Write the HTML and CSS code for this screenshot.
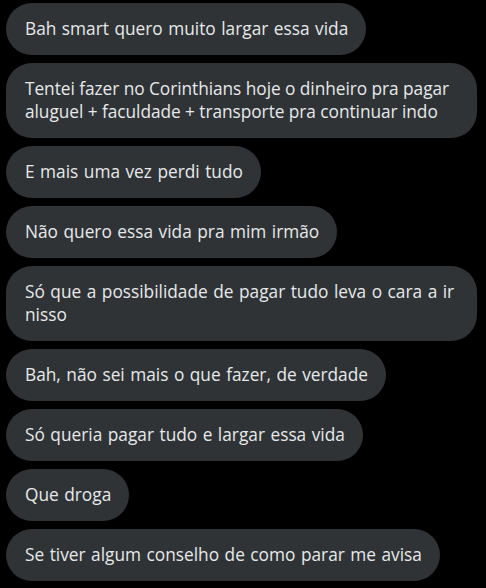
FILE: index.html
```html
<!DOCTYPE html>
<html lang="pt-BR">
<head>
    <meta charset="UTF-8">
    <title>Mensagens</title>
    <link rel="stylesheet" href="styles.css">
</head>
<body>
<div class="chat">
    <div class="msg">Bah smart quero muito largar essa vida</div>
    <div class="msg long">Tentei fazer no Corinthians hoje o dinheiro pra pagar aluguel + faculdade + transporte pra continuar indo</div>
    <div class="msg">E mais uma vez perdi tudo</div>
    <div class="msg">Não quero essa vida pra mim irmão</div>
    <div class="msg">Só que a possibilidade de pagar tudo leva o cara a ir nisso</div>
    <div class="msg">Bah, não sei mais o que fazer, de verdade</div>
    <div class="msg">Só queria pagar tudo e largar essa vida</div>
    <div class="msg">Que droga</div>
    <div class="msg">Se tiver algum conselho de como parar me avisa</div>
</div>
</body>
</html>
```

FILE: styles.css
```css
*{
    margin: 0;
    padding: 0;
    box-sizing: border-box;
}
body{
    background: #000;
    font-family: "Open Sans", "Liberation Sans", sans-serif;
}
.chat{
    display: flex;
    flex-direction: column;
    align-items: flex-start;
    gap: 8px;
    padding: 3px 0 0 6px;
}
.msg{
    max-width: 471px;
    padding: 14px 18px 15px 19px;
    border-radius: 26px;
    background: #2f3336;
    color: #e7e9ea;
    font-size: 17.3px;
    line-height: 23px;
    word-spacing: 1px;
}
.msg.long{
    word-spacing: 0;
    letter-spacing: -0.05px;
}
```
